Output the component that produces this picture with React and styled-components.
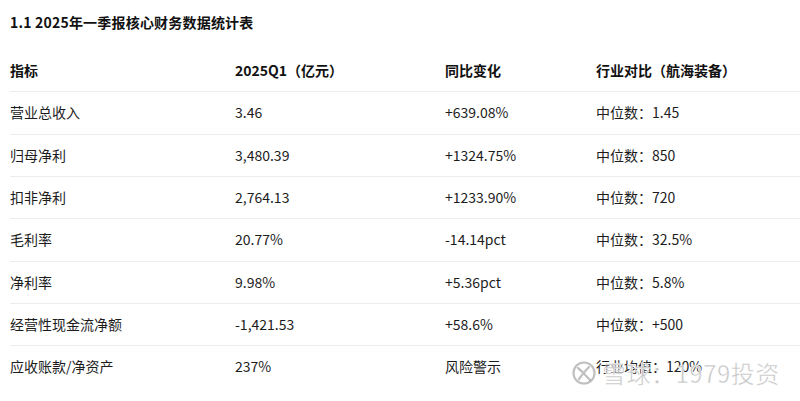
import React from "react";
import styled, { createGlobalStyle } from "styled-components";

const Global = createGlobalStyle`
  html, body { margin: 0; padding: 0; background: #fff; }
  body {
    font-family: "Noto Sans CJK SC", "Noto Sans", sans-serif;
    color: #1c1c1c;
    overflow: hidden;
  }
`;

const Page = styled.div`
  position: relative;
  width: 800px;
  height: 401px;
  overflow: hidden;
  padding-left: 10px;
  box-sizing: border-box;
`;

const Title = styled.h3`
  margin: 0;
  padding-top: 12px;
  font-size: 14px;
  line-height: 20px;
  font-weight: 700;
  color: #111;
  letter-spacing: 0.2px;
`;

const Table = styled.div`
  margin-top: 18px;
  width: 820px;
`;

const Row = styled.div`
  display: grid;
  grid-template-columns: 225px 210px 151px 1fr;
  border-bottom: ${(p) => (p.$last ? "none" : "1px solid #ececec")};
`;

const Cell = styled.div`
  padding: 10px 0;
  font-size: 14px;
  line-height: 21.33px;
  font-weight: ${(p) => (p.$head ? 700 : 400)};
  color: ${(p) => (p.$head ? "#111" : "#1c1c1c")};
  white-space: nowrap;
`;

const Watermark = styled.div`
  position: absolute;
  left: 572px;
  top: 358px;
  display: flex;
  align-items: center;
  gap: 6px;
  pointer-events: none;
`;

const WatermarkText = styled.span`
  font-family: "Noto Sans CJK SC", sans-serif;
  font-size: 24px;
  line-height: 30px;
  color: rgba(150, 150, 150, 0.55);
  -webkit-text-stroke: 0.6px rgba(255, 255, 255, 0.8);
  text-shadow: 0 0 1px #fff;
  letter-spacing: 0.5px;
`;

const Logo = () => (
  <svg width="24" height="28" viewBox="0 0 24 28" fill="none">
    <circle cx="12" cy="14" r="10.5" stroke="rgba(150,150,150,0.6)" strokeWidth="2.2" />
    <path
      d="M6 9 C 10 12, 13 16, 18 21 M7 20 C 10 16, 13 12, 17 8"
      stroke="rgba(150,150,150,0.6)"
      strokeWidth="2.2"
      strokeLinecap="round"
    />
  </svg>
);

const rows = [
  ["营业总收入", "3.46", "+639.08%", "中位数：1.45"],
  ["归母净利", "3,480.39", "+1324.75%", "中位数：850"],
  ["扣非净利", "2,764.13", "+1233.90%", "中位数：720"],
  ["毛利率", "20.77%", "-14.14pct", "中位数：32.5%"],
  ["净利率", "9.98%", "+5.36pct", "中位数：5.8%"],
  ["经营性现金流净额", "-1,421.53", "+58.6%", "中位数：+500"],
  ["应收账款/净资产", "237%", "风险警示", "行业均值：120%"],
];

export default function App() {
  return (
    <>
      <Global />
      <Page>
        <Title>1.1 2025年一季报核心财务数据统计表</Title>
        <Table>
          <Row>
            <Cell $head>指标</Cell>
            <Cell $head>2025Q1（亿元）</Cell>
            <Cell $head>同比变化</Cell>
            <Cell $head>行业对比（航海装备）</Cell>
          </Row>
          {rows.map((r, i) => (
            <Row key={i} $last={i === rows.length - 1}>
              {r.map((c, j) => (
                <Cell key={j}>{c}</Cell>
              ))}
            </Row>
          ))}
        </Table>
        <Watermark>
          <Logo />
          <WatermarkText>雪球：1979投资</WatermarkText>
        </Watermark>
      </Page>
    </>
  );
}
